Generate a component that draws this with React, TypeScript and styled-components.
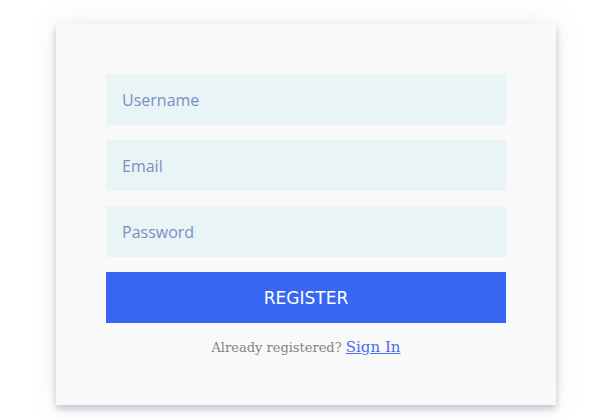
import styled, { createGlobalStyle } from 'styled-components'

const GlobalStyle = createGlobalStyle`
  body {
    margin: 0;
    background: #ffffff;
  }
`

const Page = styled.div`
  padding: 24px 0 0 56px;
  height: 419px;
  box-sizing: border-box;
`

const Card = styled.form`
  width: 500px;
  box-sizing: border-box;
  padding: 50px 50px 49px;
  background: #f9f9f9;
  box-shadow: 0 4px 7px rgba(60, 70, 90, 0.28), 0 0 24px rgba(150, 160, 200, 0.18);
  display: flex;
  flex-direction: column;
  gap: 15px;
`

const Field = styled.input`
  height: 51px;
  border: none;
  outline: none;
  background: #e8f4f6;
  padding: 0 16px;
  font-family: 'Open Sans', sans-serif;
  font-size: 16px;
  color: #3a4a7a;
  caret-color: #1a2a8a;

  &::placeholder {
    color: #7a8fc4;
  }
`

const Button = styled.button`
  height: 51px;
  border: none;
  background: #3866f2;
  color: #ffffff;
  font-family: 'DejaVu Sans', sans-serif;
  font-size: 17px;
  cursor: pointer;
`

const Note = styled.p`
  margin: 0;
  text-align: center;
  font-family: 'DejaVu Serif', serif;
  font-size: 13px;
  color: #8a8080;

  a {
    color: #4a6cf0;
    font-size: 15px;
  }
`

const App = () => {
  return (
    <Page>
      <GlobalStyle />
      <Card onSubmit={e => e.preventDefault()}>
        <Field type="text" placeholder="Username" />
        <Field type="email" placeholder="Email" />
        <Field type="password" placeholder="Password" autoFocus />
        <Button type="submit">REGISTER</Button>
        <Note>
          Already registered? <a href="#">Sign In</a>
        </Note>
      </Card>
    </Page>
  )
}

export default App
